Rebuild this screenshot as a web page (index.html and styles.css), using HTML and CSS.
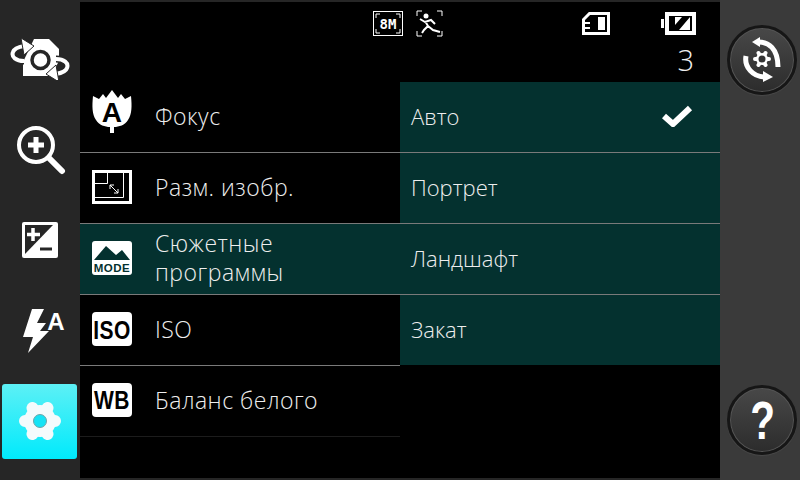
FILE: index.html
```html
<!DOCTYPE html>
<html lang="en">
<head>
  <meta charset="UTF-8">
  <title>Camera settings</title>
  <link rel="stylesheet" href="styles.css">
</head>
<body>
  <div class="screen">
    <div class="left-rail">
      <div class="rail-item">
        <svg width="60" height="42" viewBox="0 0 60 42">
          <path d="M24 1 H39 L49 11 V23 L41 38 H13 V24 Z" fill="#fff"/>
          <circle cx="30.5" cy="22" r="8.5" fill="#fff" stroke="#262626" stroke-width="3.5"/>
          <g>
            <path d="M14 23 C6 23 1 19 3 14 C4 11 8 9 14 8" fill="none" stroke="#262626" stroke-width="7"/>
            <path d="M14 23 C6 23 1 19 3 14 C4 11 8 9 14 8" fill="none" stroke="#fff" stroke-width="4"/>
            <path d="M11 0 L24 8 L14 17 Z" fill="#fff" stroke="#262626"/>
          </g>
          <g transform="rotate(180 30 22)">
            <path d="M14 23 C6 23 1 19 3 14 C4 11 8 9 14 8" fill="none" stroke="#262626" stroke-width="7"/>
            <path d="M14 23 C6 23 1 19 3 14 C4 11 8 9 14 8" fill="none" stroke="#fff" stroke-width="4"/>
            <path d="M11 0 L24 8 L14 17 Z" fill="#fff" stroke="#262626"/>
          </g>
        </svg>
      </div>
      <div class="rail-item">
        <svg class="zoom-icon" width="50" height="50" viewBox="0 0 50 50">
          <circle cx="20" cy="20" r="17" fill="none" stroke="#fff" stroke-width="4"/>
          <path d="M33 33 L46 46" stroke="#fff" stroke-width="6" stroke-linecap="round"/>
          <path d="M20 12 V28 M12 20 H28" stroke="#fff" stroke-width="5"/>
        </svg>
      </div>
      <div class="rail-item">
        <svg width="36" height="36" viewBox="0 0 36 36">
          <rect width="36" height="36" rx="2" fill="#fff"/>
          <path d="M3 3 H31 L3 32 Z" fill="#262626"/>
          <path d="M11 6 V19 M5 12.5 H18" stroke="#fff" stroke-width="3.5"/>
          <path d="M18 27 H30" stroke="#262626" stroke-width="3"/>
        </svg>
      </div>
      <div class="rail-item">
        <svg class="flash-icon" width="44" height="46" viewBox="0 0 44 46">
          <path d="M10 1 H22 L15 15 H24 L18 23 H27 L6 45 L11 29 H1 Z" fill="#fff"/>
          <text x="34" y="22" class="flash-a">A</text>
        </svg>
      </div>
      <div class="rail-item active">
        <div class="active-box">
          <svg width="42" height="38" viewBox="-21 -19 42 38">
            <path d="M-15 0 H15 M-7.5 -13 L7.5 13 M7.5 -13 L-7.5 13" stroke="#f4fbfc" stroke-width="12" stroke-linecap="round"/>
            <circle r="16" fill="#f4fbfc"/>
            <circle r="6.5" fill="#14e3f5" stroke="#6aa5aa"/>
          </svg>
        </div>
      </div>
    </div>

    <div class="main">
      <div class="header">
        <div class="status-icons">
          <div class="status-left">
            <svg width="30" height="25" viewBox="0 0 30 25">
              <rect x="0.5" y="0.5" width="29" height="24" fill="none" stroke="#fff"/>
              <path d="M3 7 V3 H7 M23 3 H27 V7 M3 18 V22 H7 M23 22 H27 V18" fill="none" stroke="#fff"/>
              <text x="15" y="17.5" class="mp-text">8M</text>
            </svg>
            <svg width="27" height="27" viewBox="0 0 27 27">
              <path d="M1 6 V1 H6 M21 1 H26 V6 M1 21 V26 H6 M21 26 H26 V21" fill="none" stroke="#fff"/>
              <circle cx="10" cy="6" r="2.5" fill="#fff"/>
              <path d="M4 9 L9 12 L15 10 L19 14 M9 11 L12 16 L8 20 L6 23 M12 16 L17 20 L24 22" fill="none" stroke="#fff" stroke-width="2"/>
            </svg>
          </div>
          <svg width="28" height="23" viewBox="0 0 28 23">
            <path d="M7.5 1.5 H26.5 V21.5 H1.5 V7.5 Z" fill="#000" stroke="#fff" stroke-width="3"/>
            <rect x="16" y="5" width="7" height="13" fill="#fff"/>
            <path d="M3 11 H8 M3 16 H8" stroke="#fff" stroke-width="2"/>
          </svg>
          <svg width="35" height="23" viewBox="0 0 35 23">
            <rect x="0" y="7" width="3" height="9" fill="#fff"/>
            <rect x="6" y="2" width="27" height="19" fill="#000" stroke="#fff" stroke-width="4"/>
            <path d="M14 5 H21 L14 13 Z M29 5 V18 H18 Z" fill="#fff"/>
          </svg>
        </div>
        <div class="shots">3</div>
      </div>

      <div class="lists">
        <div class="menu">
          <div class="menu-row">
            <svg class="menu-icon af-icon" width="40" height="44" viewBox="0 0 40 44">
              <path d="M20 0 L26 8 L29 4 L33 9 L39 6 C40 16 40 24 36 30 C33 35 27 37 22 37 L22 43 H18 L18 37 C13 37 7 35 4 30 C0 24 0 16 1 6 L7 9 L11 4 L14 8 Z" fill="#fff"/>
              <text x="20" y="32" class="badge-a">A</text>
            </svg>
            <span>Фокус</span>
          </div>
          <div class="menu-row">
            <svg class="menu-icon" width="40" height="34" viewBox="0 0 40 34">
              <rect x="1.5" y="1.5" width="37" height="31" fill="none" stroke="#fff" stroke-width="3"/>
              <path d="M3 27.5 H31.5 V3" fill="none" stroke="#fff"/>
              <path d="M3 13.5 H15.5 V3" fill="none" stroke="#fff"/>
              <path d="M18 15 L26 23 M18 15 H22 M18 15 V19 M26 23 H22 M26 23 V19" fill="none" stroke="#fff"/>
            </svg>
            <span>Разм. изобр.</span>
          </div>
          <div class="menu-row selected">
            <svg class="menu-icon" width="40" height="34" viewBox="0 0 40 34">
              <rect width="40" height="34" rx="3" fill="#fff"/>
              <path d="M2 19 L14 5 L24 14 L30 9 L38 19 Z" fill="#04312f"/>
              <text x="20" y="31" class="mode-text">MODE</text>
            </svg>
            <span>Сюжетные<br>программы</span>
          </div>
          <div class="menu-row">
            <svg class="menu-icon" width="40" height="34" viewBox="0 0 40 34">
              <rect width="40" height="34" rx="4" fill="#fff"/>
              <text transform="translate(20 27) scale(1 1.25)" class="badge-text">ISO</text>
            </svg>
            <span>ISO</span>
          </div>
          <div class="menu-row last">
            <svg class="menu-icon" width="40" height="34" viewBox="0 0 40 34">
              <rect width="40" height="34" rx="4" fill="#fff"/>
              <text transform="translate(20 26) scale(1 1.2)" class="badge-text">WB</text>
            </svg>
            <span>Баланс белого</span>
          </div>
        </div>

        <div class="options">
          <div class="option">
            <span>Авто</span>
            <svg class="check" width="32" height="22" viewBox="0 0 32 22">
              <path d="M3 11 L12 19 L29 3" fill="none" stroke="#fff" stroke-width="6"/>
            </svg>
          </div>
          <div class="option">Портрет</div>
          <div class="option">Ландшафт</div>
          <div class="option">Закат</div>
        </div>
      </div>
    </div>

    <div class="right-rail">
      <div class="round-btn">
        <svg width="38" height="46" viewBox="0 0 38 46">
          <path d="M16 5 C25 5 35 11 35 30" fill="none" stroke="#fff" stroke-width="5"/>
          <path d="M17 0 V10 L9 5 Z" fill="#fff"/>
          <path d="M3 19 C1 30 10 40 22 40" fill="none" stroke="#fff" stroke-width="5"/>
          <path d="M20 34 V45 L30 40 Z" fill="#fff"/>
          <path d="M12 22 H26 M15.5 16 L22.5 28 M22.5 16 L15.5 28" stroke="#fff" stroke-width="4" stroke-linecap="round"/>
          <circle cx="19" cy="22" r="6" fill="#fff"/>
          <circle cx="19" cy="22" r="3.5" fill="#333"/>
        </svg>
      </div>
      <div class="round-btn"><span class="help">?</span></div>
    </div>
  </div>
</body>
</html>
```

FILE: styles.css
```css
body {
  margin: 0;
  background-color: #262626;
  font-family: "Open Sans", sans-serif;
  color: #eee;
}

.screen {
  display: flex;
  width: 800px;
  height: 480px;
  overflow: hidden;
}

.left-rail {
  width: 80px;
  height: 480px;
  box-sizing: border-box;
  padding-top: 14px;
  background-color: #262626;
  flex-shrink: 0;
}

.rail-item {
  height: 90.5px;
  display: flex;
  align-items: center;
  justify-content: center;
}

.zoom-icon {
  margin-left: 2px;
}

.flash-icon {
  margin-left: 7px;
}

.rail-item.active {
  justify-content: flex-start;
  padding-left: 2px;
}

.active-box {
  width: 75px;
  height: 75px;
  border-radius: 3px;
  background: linear-gradient(#5df0f5, #00eafc);
  display: flex;
  align-items: center;
  justify-content: center;
}

.main {
  width: 640px;
  height: 476px;
  margin-top: 2px;
  background-color: #000;
  flex-shrink: 0;
}

.header {
  height: 80px;
}

.status-icons {
  display: flex;
  align-items: center;
  height: 27px;
  padding-top: 8px;
  padding-left: 293px;
}

.status-left {
  display: flex;
  align-items: center;
  gap: 13px;
  width: 209px;
}

.status-icons > svg:last-child {
  margin-left: 51px;
}

.shots {
  text-align: right;
  padding-right: 26px;
  font-size: 29px;
  line-height: 45px;
  font-weight: 300;
}

.lists {
  display: flex;
  font-size: 22px;
  font-weight: 300;
}

.menu,
.options {
  width: 320px;
}

.menu {
  font-size: 23px;
  letter-spacing: 0.5px;
}

.menu-row {
  height: 71px;
  box-sizing: border-box;
  padding-bottom: 2px;
  display: flex;
  align-items: center;
  border-bottom: 1px solid #7a7a7a;
  line-height: 29px;
}

.menu-row.selected {
  background-color: #04312f;
}

.menu-row.last {
  border-bottom-color: #1c1c1c;
}

.menu-icon {
  width: 40px;
  margin-left: 12px;
  margin-right: 23px;
  flex-shrink: 0;
}

.af-icon {
  margin-top: -8px;
}

.option {
  height: 71px;
  box-sizing: border-box;
  padding-bottom: 2px;
  display: flex;
  align-items: center;
  justify-content: space-between;
  padding-left: 11px;
  padding-right: 27px;
  background-color: #04312f;
  border-bottom: 1px solid #7a7a7a;
}

.option:last-child {
  height: 70px;
  border-bottom: none;
}

.right-rail {
  flex: 1;
  height: 480px;
  box-sizing: border-box;
  padding: 25px 0 25px 7px;
  background-color: #3a3a3a;
  display: flex;
  flex-direction: column;
  justify-content: space-between;
}

.round-btn {
  width: 70px;
  height: 70px;
  box-sizing: border-box;
  border-radius: 50%;
  border: 3px solid #161616;
  background: linear-gradient(#484848, #2c2c2c);
  box-shadow: inset 0 0 0 1px #555, 0 1px 1px #4a4a4a;
  display: flex;
  align-items: center;
  justify-content: center;
}

.help {
  display: inline-block;
  transform: scaleX(0.75);
  font-family: "Liberation Sans", sans-serif;
  font-size: 54px;
  line-height: 54px;
  font-weight: bold;
  color: #fff;
}

.flash-a {
  font-family: "Liberation Sans", sans-serif;
  font-size: 24px;
  font-weight: bold;
  fill: #fff;
  text-anchor: middle;
}

.mp-text {
  font-family: "DejaVu Sans Mono", monospace;
  font-size: 14px;
  font-weight: bold;
  fill: #fff;
  text-anchor: middle;
}

.badge-a {
  font-family: "Liberation Sans", sans-serif;
  font-size: 28px;
  font-weight: bold;
  fill: #000;
  text-anchor: middle;
}

.mode-text {
  font-family: "Liberation Sans", sans-serif;
  font-size: 11.5px;
  font-weight: bold;
  fill: #04312f;
  text-anchor: middle;
}

.badge-text {
  font-family: "Liberation Sans", sans-serif;
  font-size: 21px;
  font-weight: bold;
  fill: #000;
  text-anchor: middle;
}
```
